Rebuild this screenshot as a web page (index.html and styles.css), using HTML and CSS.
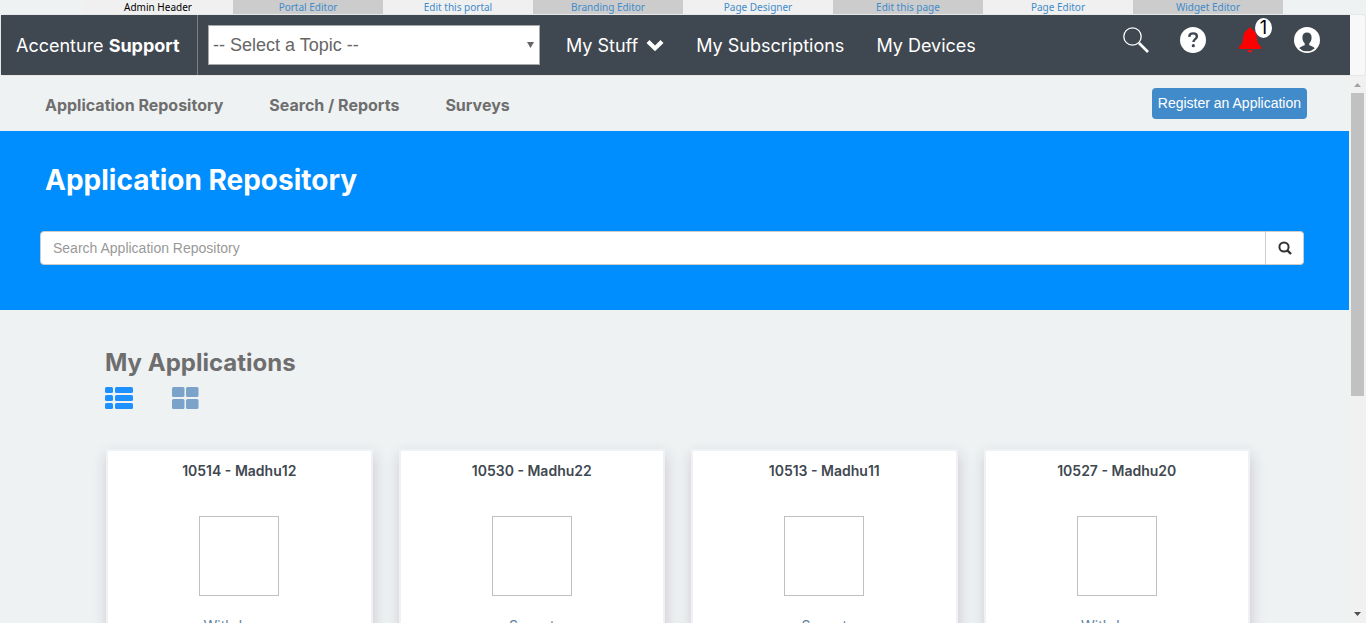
FILE: index.html
```html
<!DOCTYPE html>
<html lang="en">
<head>
<meta charset="utf-8">
<title>Application Repository</title>
<link rel="stylesheet" href="styles.css">
</head>
<body>
<nav class="admin-bar" aria-label="Administration">
  <span class="admin-item admin-title">Admin Header</span>
  <a class="admin-item" href="#">Portal Editor</a>
  <a class="admin-item" href="#">Edit this portal</a>
  <a class="admin-item" href="#">Branding Editor</a>
  <a class="admin-item" href="#">Page Designer</a>
  <a class="admin-item" href="#">Edit this page</a>
  <a class="admin-item" href="#">Page Editor</a>
  <a class="admin-item" href="#">Widget Editor</a>
</nav>
<header class="navbar">
  <div class="navbar-inner">
    <a class="brand" href="#">Accenture <b>Support</b></a>
    <div class="topic">
      <select class="topic-select" aria-label="Topic"><option>-- Select a Topic --</option></select>
      <svg class="topic-arrow" width="7" height="6" viewBox="0 0 7 6"><path d="M0 0h7L3.500 6z" fill="#666"/></svg>
    </div>
    <nav class="main-nav" aria-label="Main">
      <a class="main-link" href="#">My Stuff
        <svg width="18" height="13" viewBox="0 0 18 13"><path d="M3.500 1L9 6.400 14.500 1 17.500 4 9 12.200.500 4z" fill="#fff"/></svg>
      </a>
      <a class="main-link" href="#">My Subscriptions</a>
      <a class="main-link" href="#">My Devices</a>
    </nav>
    <div class="tools">
      <button class="tool" type="button" aria-label="Search">
        <svg width="28" height="28" viewBox="0 0 28 28" fill="none" stroke="#fff"><circle cx="10.500" cy="10.500" r="8.700" stroke-width="1.300"/><path d="M17 17l9 9" stroke-width="2.600"/></svg>
      </button>
      <button class="tool" type="button" aria-label="Help">
        <svg width="28" height="28" viewBox="0 0 28 28"><circle cx="14" cy="14" r="13" fill="#fff"/><path d="M10.200 10.800c.2-2.200 1.700-3.400 3.900-3.400 2.300 0 3.800 1.200 3.800 3.100 0 2.500-3.500 2.700-3.500 5.500" fill="none" stroke="#3f4850" stroke-width="2.400"/><circle cx="14.300" cy="19.700" r="1.600" fill="#3f4850"/></svg>
      </button>
      <button class="tool" type="button" aria-label="Notifications, 1 new">
        <svg width="28" height="28" viewBox="0 0 28 28"><path d="M14 1.500c1.200 0 1.800.8 1.900 1.900 3 1 4.300 3.800 4.700 7 .5 4.800 1.200 7.800 4.400 10.200v2.500H3v-2.500c3.200-2.400 3.900-5.400 4.400-10.200.4-3.200 1.700-6 4.700-7 .1-1.100.7-1.900 1.900-1.900z" fill="red"/><path d="M11.300 24h5.400c-.2 1.700-1.200 2.500-2.700 2.500s-2.500-.8-2.700-2.500z" fill="#e01818"/></svg>
        <span class="badge">1</span>
      </button>
      <button class="tool" type="button" aria-label="Profile">
        <svg width="28" height="28" viewBox="0 0 28 28"><circle cx="14" cy="14" r="13" fill="#fff"/><path d="M14 6.500c2.900 0 4.700 2 4.600 4.900 0 2.700-1 4.700-2.300 5.900v2c1.900.9 4.400 1.400 5.500 2.900a11.300 11.300 0 0 1-15.600 0c1.100-1.500 3.600-2 5.500-2.900v-2c-1.300-1.200-2.300-3.200-2.300-5.900C9.300 8.500 11.100 6.500 14 6.500z" fill="#3f4850"/></svg>
      </button>
    </div>
  </div>
</header>
<div class="viewport">
  <main class="page">
    <div class="subnav">
      <nav class="sub-links" aria-label="Section">
        <a href="#">Application Repository</a>
        <a href="#">Search / Reports</a>
        <a href="#">Surveys</a>
      </nav>
      <button class="register" type="button">Register an Application</button>
    </div>
    <section class="hero">
      <h1>Application Repository</h1>
      <form class="search">
        <input class="search-input" type="text" placeholder="Search Application Repository" aria-label="Search Application Repository">
        <button class="search-button" type="button" aria-label="Search">
          <svg width="14" height="14" viewBox="0 0 14 14" fill="none" stroke="#333"><circle cx="6" cy="6" r="4.600" stroke-width="2"/><path d="M9.300 9.300l3.700 3.700" stroke-width="2.400"/></svg>
        </button>
      </form>
    </section>
    <section class="apps">
      <h2>My Applications</h2>
      <div class="views">
        <button type="button" aria-label="List view">
          <svg width="28" height="22" viewBox="0 0 28 22" fill="#1e90ff"><rect width="8" height="6" rx="1.500"/><rect x="10" width="18" height="6" rx="1.500"/><rect y="8" width="8" height="6" rx="1.500"/><rect x="10" y="8" width="18" height="6" rx="1.500"/><rect y="16" width="8" height="6" rx="1.500"/><rect x="10" y="16" width="18" height="6" rx="1.500"/></svg>
        </button>
        <button type="button" aria-label="Grid view">
          <svg width="27" height="22" viewBox="0 0 27 22" fill="#7ba3c9"><rect width="12.500" height="10" rx="1.500"/><rect x="14" width="12.500" height="10" rx="1.500"/><rect y="12" width="12.500" height="10" rx="1.500"/><rect x="14" y="12" width="12.500" height="10" rx="1.500"/></svg>
        </button>
      </div>
      <div class="cards">
        <article class="card"><h3>10514 - Madhu12</h3><div class="thumb"></div><a href="#">Withdrawn</a></article>
        <article class="card"><h3>10530 - Madhu22</h3><div class="thumb"></div><a href="#">Sunset</a></article>
        <article class="card"><h3>10513 - Madhu11</h3><div class="thumb"></div><a href="#">Sunset</a></article>
        <article class="card"><h3>10527 - Madhu20</h3><div class="thumb"></div><a href="#">Withdrawn</a></article>
      </div>
    </section>
  </main>
  <div class="scrollbar" aria-hidden="true">
    <svg width="7" height="4" viewBox="0 0 7 4"><path d="M0 4h7L3.500 0z" fill="#a3a3a3"/></svg>
    <div class="track"><div class="thumb-bar"></div></div>
    <svg width="7" height="4" viewBox="0 0 7 4"><path d="M0 0h7L3.500 4z" fill="#505050"/></svg>
  </div>
</div>
</body>
</html>
```
FILE: styles.css
```css
* { box-sizing: border-box; }
body {
  margin: 0;
  height: 100vh;
  display: flex;
  flex-direction: column;
  overflow: hidden;
  background: #eef2f3;
  font-family: Inter, "Liberation Sans", sans-serif;
  color: #3f4850;
}
a { text-decoration: none; color: inherit; }
button { padding: 0; border: 0; background: none; cursor: pointer; }
svg { display: block; }
h1, h2, h3 { margin: 0; }

.admin-bar { display: flex; justify-content: center; flex: none; }
.admin-item {
  width: 150px;
  height: 14px;
  line-height: 14px;
  text-align: center;
  font-family: "Noto Sans", sans-serif;
  font-size: 10px;
  color: #428bca;
  background: #f0f0f0;
}
.admin-item:nth-child(even) { background: #ccc; }
.admin-title { color: #000; }

.navbar {
  flex: none;
  border: 1px solid #e7e7e7;
  border-radius: 4px;
  background: #f8f8f8;
  padding-right: 15px;
}
.navbar-inner { display: flex; height: 60px; background: #3f4850; color: #fff; font-size: 18px; }
.brand {
  display: flex;
  align-items: center;
  gap: 5px;
  width: 197px;
  padding-left: 15px;
  border-right: 1px solid #808080;
}
.brand b { font-weight: 700; }
.topic { position: relative; width: 332px; height: 40px; margin: 10px 26px 0 10px; }
.topic-select {
  appearance: none;
  width: 100%;
  height: 100%;
  padding: 0 4px;
  border: 1px solid #a9a9a9;
  border-radius: 0;
  background: #fff;
  color: #666;
  font: 18px "Liberation Sans", sans-serif;
}
.topic-arrow { position: absolute; right: 6px; top: 17px; pointer-events: none; }
.main-nav { display: flex; align-items: center; gap: 32px; }
.main-link { display: flex; align-items: center; gap: 8px; white-space: nowrap; }
.tools { display: flex; gap: 29px; margin-left: auto; padding: 11px 29px 0 0; }
.tool { position: relative; width: 28px; height: 28px; }
.badge {
  position: absolute;
  left: 19px;
  top: -8px;
  width: 17px;
  height: 20px;
  line-height: 20px;
  border-radius: 50%;
  background: #fff;
  color: #000;
  font-family: Inter, sans-serif;
  font-size: 18px;
}

.viewport { flex: 1; min-height: 0; display: flex; }
.page { flex: 1; min-width: 0; overflow: hidden; }
.scrollbar {
  display: flex;
  flex-direction: column;
  align-items: center;
  gap: 6px;
  width: 17px;
  padding: 7px 2px;
  background: #f1f1f1;
}
.track { flex: 1; width: 13px; }
.thumb-bar { height: 59%; background: #c1c1c1; }

.subnav {
  display: flex;
  justify-content: space-between;
  align-items: center;
  height: 55px;
  padding: 0 42px 0 45px;
}
.sub-links { display: flex; gap: 46px; padding-top: 3px; font-size: 16px; font-weight: 700; color: #6e6e6e; }
.register {
  height: 31px;
  padding: 0 6px 1px;
  border-radius: 4px;
  background: #428bca;
  color: #fff;
  font: 14px "Liberation Sans", sans-serif;
}

.hero { height: 179px; padding: 32px 45px 0 40px; background: #008eff; }
.hero h1 { padding-left: 5px; font-size: 28px; line-height: 34px; font-weight: 700; color: #fff; }
.search { display: flex; height: 34px; margin-top: 34px; }
.search-input {
  flex: 1;
  min-width: 0;
  padding: 0 12px;
  border: 1px solid #ccc;
  border-radius: 4px 0 0 4px;
  background: #fff;
  font: 14px "Liberation Sans", sans-serif;
}
.search-input::placeholder { color: #999; }
.search-button {
  display: grid;
  place-items: center;
  width: 38px;
  border: 1px solid #ccc;
  border-left: 0;
  border-radius: 0 4px 4px 0;
  background: #fff;
}

.apps { padding: 38px 99px 0 105px; }
.apps h2 { font-size: 24px; line-height: 30px; font-weight: 700; color: #6e6e6e; }
.views { display: flex; gap: 39px; margin-top: 9px; }
.cards { display: grid; grid-template-columns: repeat(4, 1fr); gap: 26px; margin-top: 40px; padding-left: 1px; }
.card {
  display: flex;
  flex-direction: column;
  align-items: center;
  height: 240px;
  padding-top: 10px;
  border: 2px solid #eff2f5;
  background: #fff;
  box-shadow: 1px 6px 14px rgba(80, 40, 75, 0.2);
  font-size: 14px;
}
.card h3 { font-size: 14px; line-height: 20px; font-weight: 600; }
.thumb { width: 80px; height: 80px; margin: 35px 0 20px; border: 1px solid #c0c0c0; }
.card a { line-height: 20px; color: #5f7f9f; }
```
